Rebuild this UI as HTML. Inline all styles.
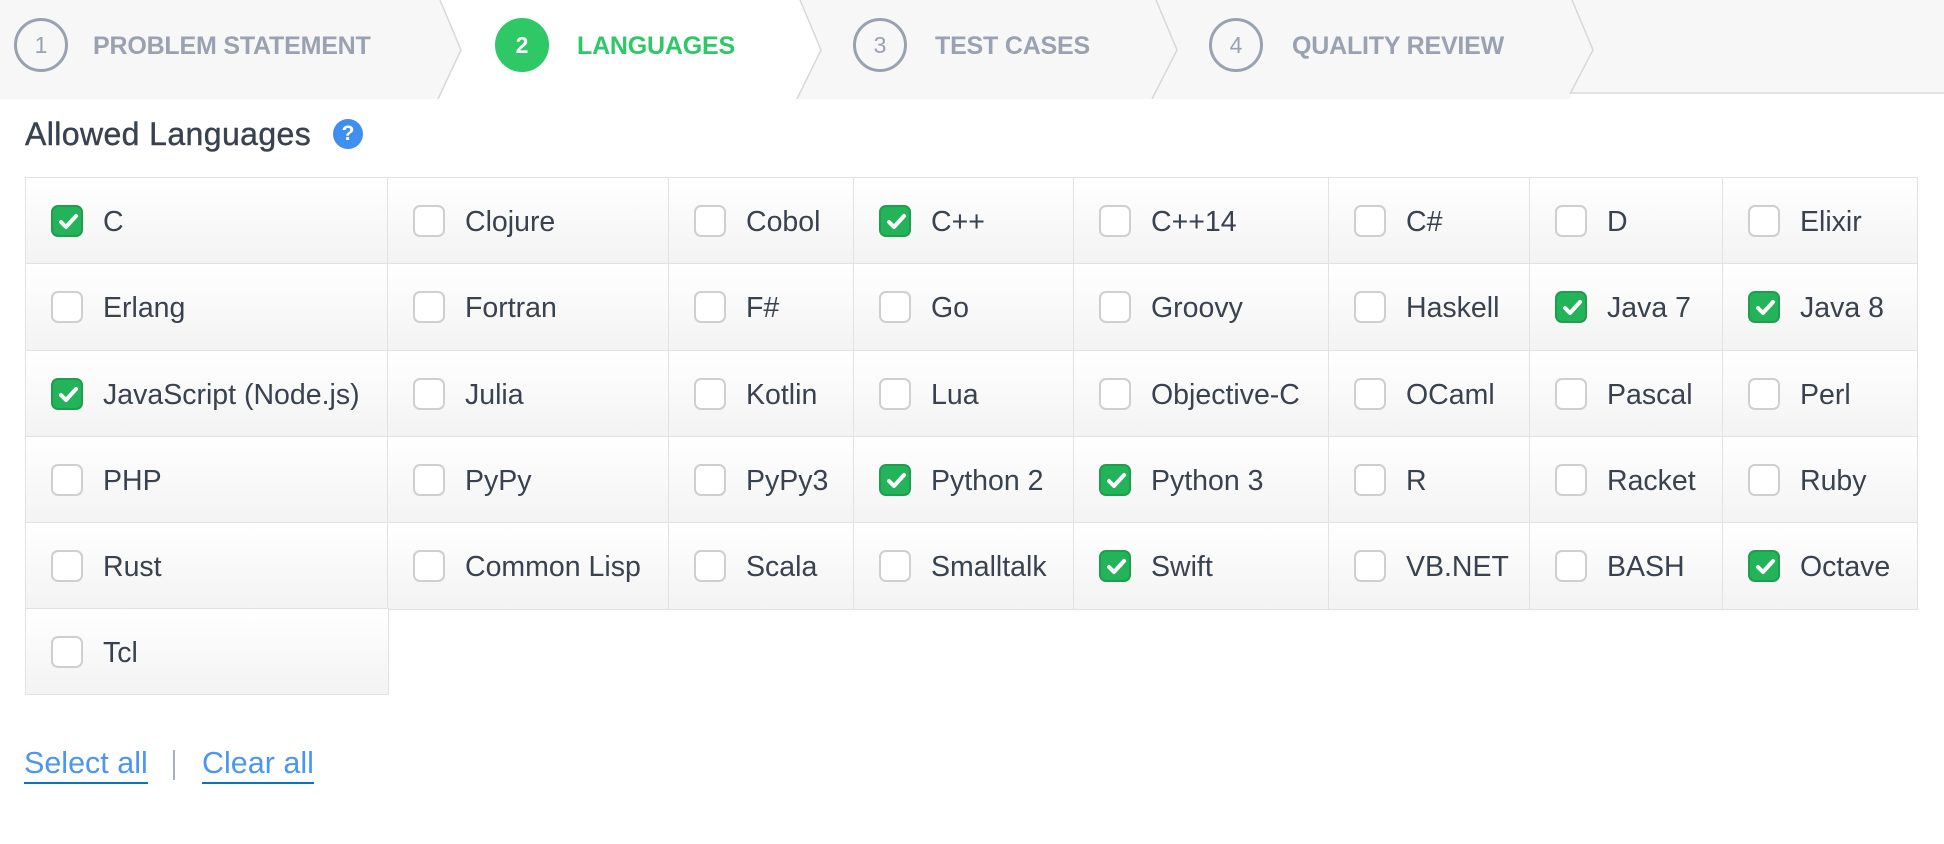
<!DOCTYPE html>
<html><head><meta charset="utf-8"><style>
*{margin:0;padding:0;box-sizing:border-box}
body{width:1944px;height:844px;background:#fff;font-family:"Liberation Sans",Arial,sans-serif;position:relative;overflow:hidden;color:#39424e}
.hdr{position:absolute;left:0;top:0;width:1944px;height:99px}
.st{position:absolute;top:2px;height:88px;display:flex;align-items:center;font-weight:bold;font-size:25px;color:#9aa1b0;letter-spacing:-0.2px}
.circ{position:absolute;width:54px;height:54px;border-radius:50%;border:3px solid #9aa1b0;display:flex;align-items:center;justify-content:center;font-size:23px;font-weight:normal;color:#9aa1b0;top:18px}
.title{position:absolute;left:25px;top:116px;font-size:32px;color:#39424e;letter-spacing:0.4px;-webkit-text-stroke:0.4px #39424e}
.q{position:absolute;left:333px;top:119px;width:30px;height:30px;border-radius:50%;background:#3e8ff0;color:#fff;font-weight:bold;font-size:21px;text-align:center;line-height:30px}
.cell{position:absolute;border:1.5px solid #e2e2e2;background:linear-gradient(#fff,#f3f3f3);}
.cb{position:absolute;left:25px;top:27px;width:32px;height:32px;border-radius:7px;border:2px solid #cfcfcf;background:#fff}
.cb.on{background:#23b45a;border-color:#1f9e4f}
.cb.on svg{position:absolute;left:1px;top:1px}
.lb{position:absolute;left:77px;top:28px;font-size:28.5px;color:#39424e;white-space:nowrap}
.lnk{position:absolute;top:745px;font-size:30.5px;color:#4b96f0;border-bottom:2.5px solid #0a74bc;line-height:37px}
</style></head><body>
<div class="hdr">
<svg width="1944" height="99" style="position:absolute;left:0;top:0">
<rect x="0" y="0" width="1944" height="93" fill="#f7f7f7"/>
<rect x="0" y="93" width="1570" height="6" fill="#f7f7f7"/>
<polygon points="440,0 800,0 821,50 797,99 438,99 461,50" fill="#fff"/>
<line x1="1570" y1="93" x2="1944" y2="93" stroke="#e3e3e3" stroke-width="2"/>
<polyline points="440,0 461,50 438,99" fill="none" stroke="#d8d8d8" stroke-width="1.5"/>
<polyline points="800,0 821,50 797,99" fill="none" stroke="#d8d8d8" stroke-width="1.5"/>
<polyline points="1156,0 1177,50 1152,99" fill="none" stroke="#d8d8d8" stroke-width="1.5"/>
<polyline points="1572,0 1593,50 1570,94" fill="none" stroke="#d8d8d8" stroke-width="1.5"/>
</svg>
<div class="circ" style="left:14px">1</div>
<div class="st" style="left:93px">PROBLEM STATEMENT</div>
<div class="circ" style="left:495px;background:#2ec866;border-color:#2ec866;color:#fff;font-weight:bold">2</div>
<div class="st" style="left:577px;color:#2ec866">LANGUAGES</div>
<div class="circ" style="left:853px">3</div>
<div class="st" style="left:935px">TEST CASES</div>
<div class="circ" style="left:1209px">4</div>
<div class="st" style="left:1292px">QUALITY REVIEW</div>
</div>
<div class="title">Allowed Languages</div>
<div class="q">?</div>
<div id="grid"></div>
<a class="lnk" style="left:24px">Select all</a>
<div style="position:absolute;left:173px;top:750px;width:2px;height:30px;background:#a9b0bd"></div>
<a class="lnk" style="left:202px">Clear all</a>
<script>
var cols=[25,387,668,853,1073,1328,1529,1722,1916];
var rows=[177,263,350,436,522,608,693];
var d=[
["C",1],["Clojure",0],["Cobol",0],["C++",1],["C++14",0],["C#",0],["D",0],["Elixir",0],
["Erlang",0],["Fortran",0],["F#",0],["Go",0],["Groovy",0],["Haskell",0],["Java 7",1],["Java 8",1],
["JavaScript (Node.js)",1],["Julia",0],["Kotlin",0],["Lua",0],["Objective-C",0],["OCaml",0],["Pascal",0],["Perl",0],
["PHP",0],["PyPy",0],["PyPy3",0],["Python 2",1],["Python 3",1],["R",0],["Racket",0],["Ruby",0],
["Rust",0],["Common Lisp",0],["Scala",0],["Smalltalk",0],["Swift",1],["VB.NET",0],["BASH",0],["Octave",1],
["Tcl",0]];
var h="";
var chk='<svg width="28" height="28" viewBox="0 0 28 28"><path d="M7 14 L12 19 L22 8" fill="none" stroke="#fff" stroke-width="4" stroke-linecap="round" stroke-linejoin="round"/></svg>';
d.forEach(function(it,i){var r=Math.floor(i/8),c=i%8;
h+='<div class="cell" style="left:'+cols[c]+'px;top:'+rows[r]+'px;width:'+(cols[c+1]-cols[c]+1.5)+'px;height:'+(rows[r+1]-rows[r]+1.5)+'px"><div class="cb'+(it[1]?' on':'')+'">'+(it[1]?chk:'')+'</div><div class="lb">'+it[0]+'</div></div>';});
document.getElementById("grid").innerHTML=h;
</script>
</body></html>
